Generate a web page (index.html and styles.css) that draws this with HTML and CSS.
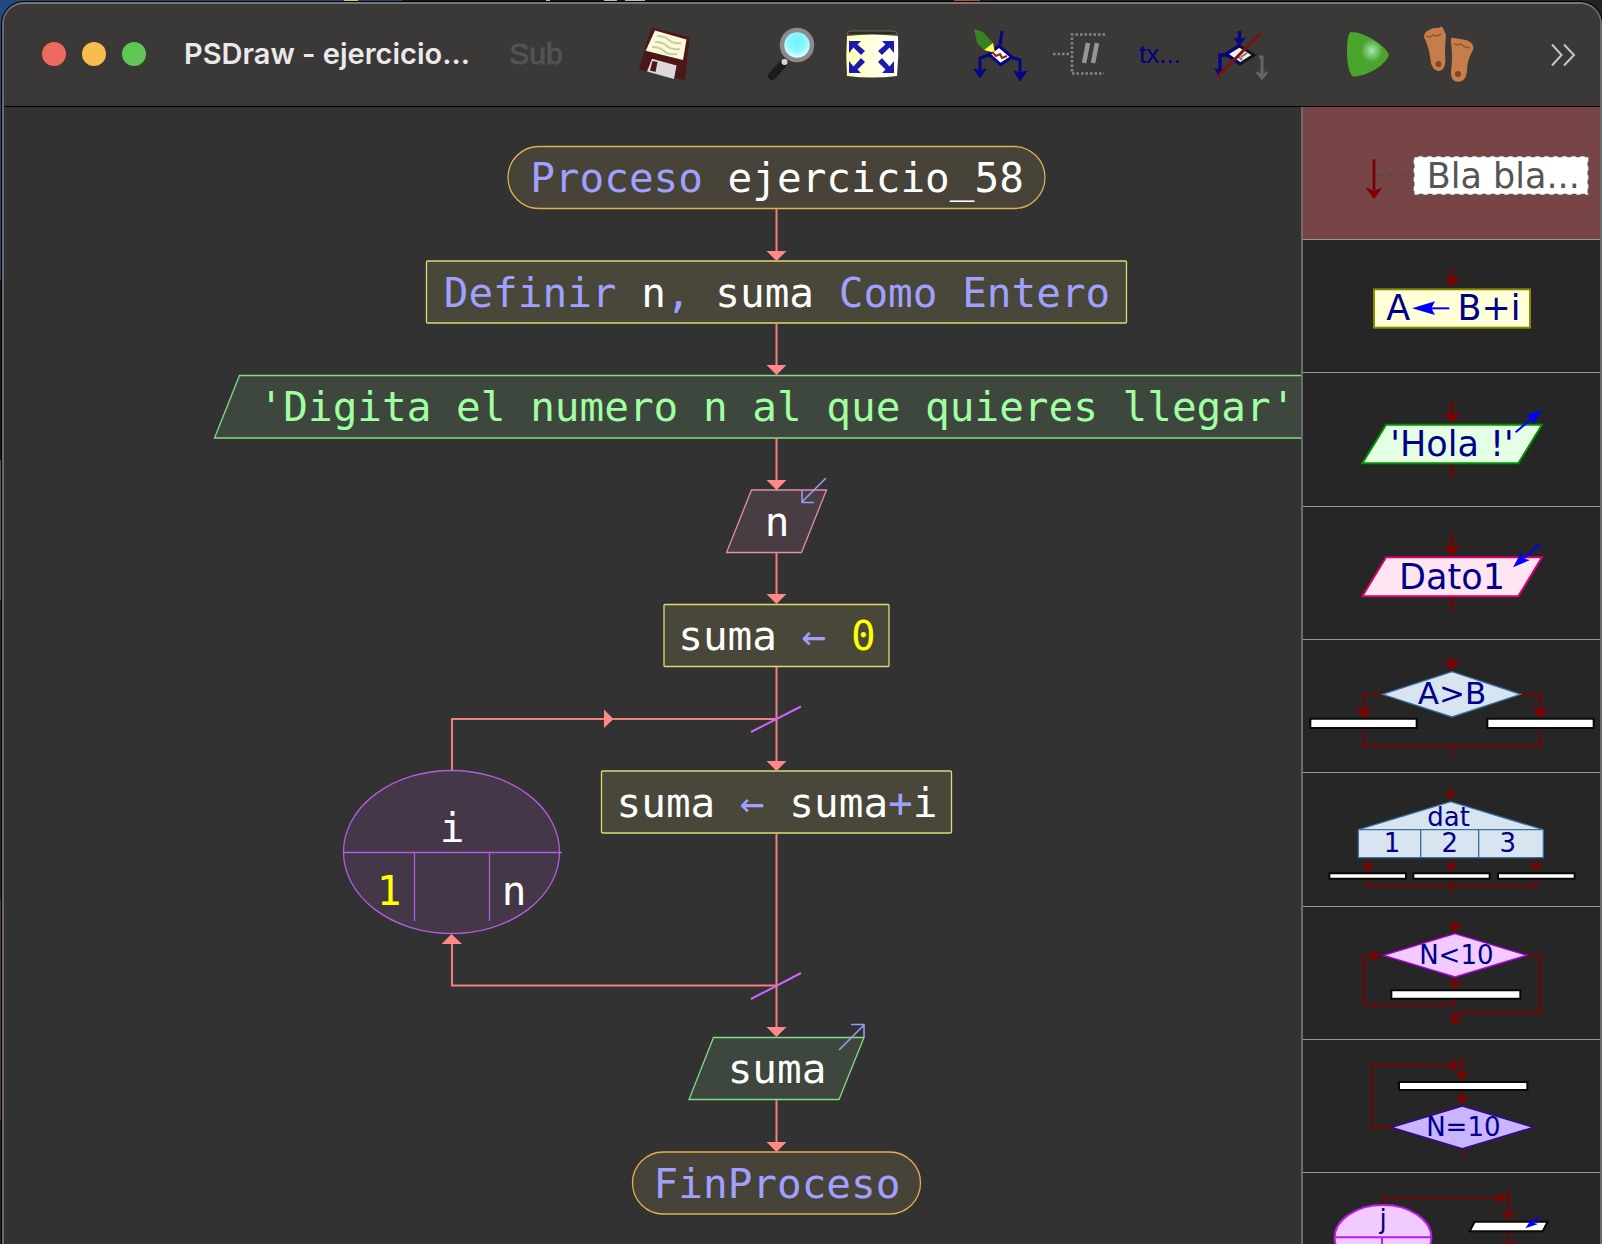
FILE: index.html
```html
<!DOCTYPE html>
<html lang="es">
<head>
<meta charset="utf-8">
<title>PSDraw - ejercicio_58</title>
<link rel="stylesheet" href="styles.css">
</head>
<body>
<svg class="defs" width="0" height="0" aria-hidden="true">
  <defs>
    <path id="head" d="M0 0L-26 -36L0 -26L26 -36Z"/>
    <path id="tip" d="M-10 -10H10L0 0Z"/>
    <radialGradient id="lens" cx="50%" cy="40%" r="60%"><stop offset="0" stop-color="#6cf3fb"/><stop offset=".5" stop-color="#8ef7fd"/><stop offset="1" stop-color="#fff"/></radialGradient>
    <linearGradient id="cream"><stop offset="0" stop-color="#ffffb8"/><stop offset=".5" stop-color="#ffffe0"/><stop offset="1" stop-color="#fff"/></linearGradient>
    <radialGradient id="gloss" cx="59%" cy="42%" r="26%"><stop offset="0" stop-color="#a4e6b4"/><stop offset="1" stop-color="#4aa52d"/></radialGradient>
  </defs>
</svg>
<div class="window">
  <header class="titlebar">
    <div class="lights">
      <button class="light close" aria-label="Cerrar"></button>
      <button class="light minimize" aria-label="Minimizar"></button>
      <button class="light expand" aria-label="Ampliar"></button>
    </div>
    <h1 class="title">PSDraw - ejercicio...</h1>
    <nav class="toolbar">
      <div class="group">
        <button class="tool sub" disabled>Sub</button>
      </div>
      <div class="group">
        <button class="tool" aria-label="Guardar">
          <svg viewBox="0 0 54 56"><path d="M15 1.5L52.6 11.3L48 54L2 43.500L11 12Z" fill="#4c1717"/><path d="M18 4.500L49.500 13.500L46 34L8.700 24.700Z" fill="#fdf8da"/><path d="M20 10q8 0 12 4t12 3M18 16q8 0 12 4t13 3M15 21q8 0 12 4t13 3" fill="none" stroke="#c0d0a4" stroke-width="2"/><path d="M15 32.700L39.500 39.500L37 53L10 45.500Z" fill="#ded8de"/><path d="M15.500 35L20.500 36L18.500 46L13 44.500Z" fill="#4c1717"/></svg>
        </button>
      </div>
      <div class="group">
        <button class="tool" aria-label="Zoom">
          <svg viewBox="0 0 54 56"><path d="M17 39L7 50" stroke="#1b1b1b" stroke-width="8" stroke-linecap="round"/><circle cx="19.500" cy="36" r="3" fill="#d8d8d8"/><circle cx="32" cy="19" r="15" fill="url(#lens)" stroke="#8b8b8b" stroke-width="4.500"/></svg>
        </button>
        <button class="tool" aria-label="Ajustar a la ventana">
          <svg viewBox="0 0 54 56"><path d="M2 9Q2 5 6 5H48Q52 5 52.500 9Z" fill="#2b2b20" stroke="#6d6d50"/><path d="M2 10Q27 7 53 10Q54 30 52 50Q27 53 2 50Q.5 30 2 10Z" fill="url(#cream)"/><path d="M4 15H16L12.500 18.500L20 25L16 29L8.500 21.500L4 27ZM49 15H37L40.500 18.500L33 25L37 29L44.500 21.500L49 27ZM4 47H16L12.500 43.500L20 36L16 32L8.500 40.500L4 35ZM49 47H37L40.500 43.500L33 36L37 32L44.500 40.500L49 35Z" fill="#1a1aae"/></svg>
        </button>
      </div>
      <div class="group">
        <button class="tool" aria-label="Editar">
          <svg viewBox="0 0 54 56"><g fill="none" stroke="#060680" stroke-width="3"><path d="M29 5L27 19M16 29L7 32V49M38 31L47 34V52"/><path d="M26 20L39 31L27.500 38.500L16 28Z" fill="#fff"/></g><path d="M1 43L7 45L13 43L7 52ZM41 45L47 47L54 45L47 55Z" fill="#060680" stroke="#060680"/><path d="M1 3L10 6L20 17L11 24L4 17Z" fill="#3a8121"/><path d="M20 17L22 27L11 24Z" fill="#ffff55"/><path d="M19 26L23 30L27 28L29 32L34 30" fill="none" stroke="#8b2323" stroke-width="2"/></svg>
        </button>
        <button class="tool" aria-label="Comentario">
          <svg viewBox="0 0 54 56"><path d="M0 28H17M52 8.500H19V47.500H51" fill="none" stroke="#858585" stroke-width="2.500" stroke-dasharray="2.500 2"/><path d="M35 17L31 37M44 17L40 37" stroke="#959595" stroke-width="4.500"/></svg>
        </button>
        <button class="tool tx">tx...</button>
        <button class="tool" aria-label="Estructura">
          <svg viewBox="0 0 54 56"><path d="M46 31H49V51M44 46L49 52L54 46" fill="none" stroke="#646464" stroke-width="3"/><path d="M26.500 20L41 29L27 38L13 28Z" fill="#f4eee0" stroke="#111122" stroke-width="3"/><path d="M27 19L13 28L26 37" fill="none" stroke="#060680" stroke-width="3"/><path d="M26.500 5V14M14 29H7V46" fill="none" stroke="#060680" stroke-width="3.500"/><path d="M20 11L26.500 13L33 11L26.500 20ZM1 42L7 44L12 42L6 51Z" fill="#060680"/><path d="M28 31L34 27M25 30L29 34" stroke="#777" stroke-width="2"/><path d="M48 7L4 51" stroke="#741414" stroke-width="3"/></svg>
        </button>
      </div>
      <div class="group">
        <button class="tool" aria-label="Ejecutar">
          <svg viewBox="0 0 54 56"><path d="M10 6C24 6 45 20 48 29C45 38 28 50 13 50.500C9 51 6 38 6 27C6 16 7 6 10 6Z" fill="url(#gloss)"/></svg>
        </button>
        <button class="tool" aria-label="Paso a paso">
          <svg viewBox="0 0 54 56"><g fill="#c57d4c"><path d="M3 11Q3 6 8 4Q13 1 18 2Q20 -1 22 2L25 9Q24 18 24 27Q26 44 18 45Q10 45 9 30Q7 19 3 11Z"/><path d="M30 16Q29 11 33 12L45 14Q54 17 52 24Q46 34 46 45Q45 56 37 56Q29 55 30 45Q32 31 30 16Z"/></g><path d="M5 10l4 1 3-2 4 1 4-2M33 18l4 1 3-1 4 3 5 1" fill="none" stroke="#985228" stroke-width="1.500"/><circle cx="17.500" cy="38" r="3" fill="#874322"/><circle cx="37" cy="48" r="3" fill="#874322"/></svg>
        </button>
      </div>
      <div class="group">
        <button class="tool more" aria-label="Más">
          <svg viewBox="0 0 28 56"><path d="M3 18.500L12.500 29L3 39.500M15 18.500L25 29L15 39.500" fill="none" stroke="#c4c4c4" stroke-width="2"/></svg>
        </button>
      </div>
    </nav>
  </header>
  <div class="workspace">
    <main class="canvas">
      <svg class="diagram" role="img" aria-label="Diagrama de flujo">
        <g transform="translate(-4 -107)">
          <g class="shape">
            <rect class="terminal" x="508" y="146.500" width="537" height="62" rx="31"/>
            <rect class="assign" x="426.500" y="261" width="700" height="62" rx="1"/>
            <path class="output" d="M239.500 375.500H1339L1314 438H214.500Z"/>
            <path class="input" d="M751.500 490H826.500L801.500 552.500H726.500Z"/>
            <rect class="assign" x="664" y="604.500" width="225" height="62" rx="1"/>
            <rect class="assign" x="601.500" y="771" width="350" height="62" rx="1"/>
            <ellipse class="loop" cx="451.500" cy="852" rx="108" ry="81.500"/>
            <path class="loop" d="M343.500 852.500H562M414.500 852.500V921M489.500 852.500V921"/>
            <path class="output" d="M713.500 1037.500H864L839 1099.500H689Z"/>
            <rect class="terminal" x="632.500" y="1152" width="288" height="62" rx="31"/>
          </g>
          <path class="flow" d="M776.500 209V252M776.500 324V367M776.500 438V482M776.500 553V596M776.500 667V762M776.500 834V1028M776.500 1100V1143M452 770V719H776M776 985.500H452V943"/>
          <g fill="#f88">
            <use href="#tip" x="776.500" y="261"/><use href="#tip" x="776.500" y="375"/><use href="#tip" x="776.500" y="490"/><use href="#tip" x="776.500" y="604"/><use href="#tip" x="776.500" y="771"/><use href="#tip" x="776.500" y="1037"/><use href="#tip" x="776.500" y="1152"/>
            <path d="M604 709.500L613.500 719L604 728ZM441.500 944H462L451.500 934Z"/>
          </g>
          <path class="cut" d="M751 732L801 706.500M751 999L801 973"/>
          <path class="io" d="M826 478L802 502M802 490V502.500H814M839 1050L864 1025M851 1024.500H864V1037"/>
          <g class="code">
            <text x="777" y="192"><tspan class="kw">Proceso</tspan> ejercicio_58</text>
            <text x="777" y="307"><tspan class="kw">Definir</tspan> n<tspan class="kw">,</tspan> suma <tspan class="kw">Como Entero</tspan></text>
            <text class="str" x="777" y="421">'Digita el numero n al que quieres llegar'</text>
            <text x="777" y="536">n</text>
            <text x="777" y="650">suma <tspan class="kw">←</tspan> <tspan class="num">0</tspan></text>
            <text x="777" y="817">suma <tspan class="kw">←</tspan> suma<tspan class="kw">+</tspan>i</text>
            <text x="452" y="842">i</text>
            <text class="num" x="389" y="905">1</text>
            <text x="514" y="905">n</text>
            <text x="777" y="1083">suma</text>
            <text class="kw" x="777" y="1198">FinProceso</text>
          </g>
        </g>
      </svg>
    </main>
    <aside class="palette">
      <button class="item selected" aria-label="Comentario">
        <svg viewBox="39 21 891 396"><path d="M252 178V270" class="wire thick"/><use href="#head" x="252" y="298" class="red"/><path d="M260 227H368" stroke="#4c4c4c" stroke-width="6" stroke-dasharray="15 20" fill="none"/><rect x="371" y="169" width="524" height="115" fill="#fff" stroke="#555" stroke-width="5" stroke-dasharray="14 13"/><text class="t-lg note" x="640" y="263">Bla bla...</text></svg>
      </button>
      <button class="item" aria-label="Asignar">
        <svg viewBox="39 420 891 396"><path d="M486 506V540" class="wire thick"/><use href="#head" x="486" y="562" class="red"/><rect x="252" y="568" width="468" height="115" fill="#ffffd8" stroke="#8a8a00" stroke-width="6"/><text class="t-lg" x="325" y="660">A</text><text class="t-lg" x="597" y="660">B+i</text><path d="M420 625H478" stroke="#00f" stroke-width="6"/><path d="M366 625L435 604L424 625L435 645Z" fill="#00f"/></svg>
      </button>
      <button class="item" aria-label="Escribir">
        <svg viewBox="39 819 891 396"><path d="M486 900V945M486 1088V1131" class="wire thick"/><use href="#head" x="486" y="968" class="red"/><path d="M288 971H756L685 1087H217Z" fill="#e4ffe4" stroke="#009000" stroke-width="6"/><text class="t-lg" x="486" y="1066">'Hola !'</text><path d="M677 994L730 948" stroke="#00f" stroke-width="6"/><path d="M755 926L706 945L724 951L730 970Z" fill="#00f"/></svg>
      </button>
      <button class="item" aria-label="Leer">
        <svg viewBox="39 21 891 396"><path d="M486 101V145M486 290V332" class="wire thick"/><use href="#head" x="486" y="170" class="red"/><path d="M288 172H756L685 289H217Z" fill="#ffe4f2" stroke="#d80068" stroke-width="6"/><text class="t-lg" x="486" y="267">Dato1</text><path d="M749 132L700 176" stroke="#00f" stroke-width="6"/><path d="M669 202L694 157L700 176L720 180Z" fill="#00f"/></svg>
      </button>
      <button class="item" aria-label="Si-Entonces">
        <svg viewBox="39 420 891 396"><path d="M486 467V490M280 584H222V640M690 584H751V640M222 688V738H751V688M487 738V767" class="wire"/><use href="#head" x="486" y="513" class="red"/><use href="#head" x="222" y="657" class="red"/><use href="#head" x="751" y="657" class="red"/><path d="M277 583L486 515L692 583L486 651Z" fill="#d8e4f0" stroke="#3870a0" stroke-width="4"/><path class="block" d="M61 656H380V684H61ZM592 656H911V684H592Z"/><text class="t-md" x="486" y="611">A&gt;B</text></svg>
      </button>
      <button class="item" aria-label="Según">
        <svg viewBox="39 819 891 396"><path d="M482 860V880M235 1073V1095M485 1073V1095M738 1073V1095M235 1136V1154H738V1136M485 1136V1175" class="wire"/><g class="red"><use href="#head" transform="translate(482 897) scale(.7)"/><use href="#head" transform="translate(234 1113) scale(.75)"/><use href="#head" transform="translate(484 1113) scale(.75)"/><use href="#head" transform="translate(738 1113) scale(.75)"/></g><path d="M205 986L482 902L760 986V1070H205ZM205 986H760M392 986V1070M566 986V1070" fill="#d8e4f0" stroke="#3870a0" stroke-width="4"/><path class="block" d="M118 1117H348V1133H118ZM370 1117H599V1133H370ZM624 1117H854V1133H624Z"/><text class="t-sm" x="476" y="974">dat</text><text class="t-sm" x="306" y="1053">1</text><text class="t-sm" x="479" y="1053">2</text><text class="t-sm" x="653" y="1053">3</text></svg>
      </button>
      <button class="item" aria-label="Mientras">
        <svg viewBox="39 51 891 396"><path d="M495 90V110M495 262V275M495 326V344H222V197H245M708 197H751V368H495V385" class="wire"/><g class="red"><use href="#head" transform="translate(495 130) scale(.85)"/><use href="#head" transform="translate(495 299) scale(.85)"/><use href="#head" transform="translate(495 407) scale(.85)"/><use href="#head" transform="translate(275 197) rotate(-90) scale(.75 1)"/></g><path d="M281 196L495 131L710 196L495 261Z" fill="#f1caff" stroke="#b000e0" stroke-width="4"/><path class="block" d="M304 301H691V326H304Z"/><text class="t-sm" x="499" y="221">N&lt;10</text></svg>
      </button>
      <button class="item" aria-label="Repetir">
        <svg viewBox="39 450 891 396"><path d="M517 500V550M517 603V625M305 712H245V526H485M517 775V797" class="wire"/><g class="red"><use href="#head" transform="translate(516 573) scale(.8)"/><use href="#head" transform="translate(516 645) scale(.8)"/><use href="#head" transform="translate(514 526) rotate(-90) scale(.75 1)"/></g><path d="M305 712L517 648L730 712L517 776Z" fill="#c9b4ff" stroke="#3c00a8" stroke-width="4"/><path class="block" d="M327 576H712V600H327Z"/><text class="t-sm" x="520" y="737">N=10</text></svg>
      </button>
      <button class="item" aria-label="Para">
        <svg viewBox="39 849 891 396"><path d="M278 940V921H620M655 894V965M655 1022V1045" class="wire"/><g class="red"><use href="#head" transform="translate(655 989) scale(.8)"/><use href="#head" transform="translate(655 1076) scale(.8)"/><use href="#head" transform="translate(652 921) rotate(-90) scale(.75 1)"/></g><ellipse cx="279" cy="1040" rx="145" ry="98" fill="#f1caff" stroke="#b81ee8" stroke-width="6"/><path d="M134 1039H424M276 1039V1136" stroke="#b81ee8" stroke-width="6"/><path d="M554 992H773L758 1021H539Z" fill="#fff" stroke="#080808" stroke-width="6"/><path d="M746 978L730 993" stroke="#00f" stroke-width="6"/><path d="M706 1012L725 984L730 995L744 999Z" fill="#00f"/><text class="t-sm" x="279" y="1010">j</text></svg>
      </button>
    </aside>
  </div>
</div>
</body>
</html>
```
FILE: styles.css
```css
* { box-sizing: border-box; }
html, body { height: 100%; }
body {
  margin: 0;
  padding: 2px 0 0 2px;
  overflow: hidden;
  font-family: Inter, "Liberation Sans", sans-serif;
  background:
    linear-gradient(90deg, #24487f 344px, #e0c850 344px 358px, #24487f 358px 402px, #151515 402px 546px, #bbb 546px 550px, #151515 550px 604px, #bbb 604px 617px, #151515 617px 625px, #bbb 625px 645px, #151515 645px 954px, #c04a28 954px 980px, #222 980px) top / 100% 1px no-repeat,
    linear-gradient(90deg, #24487f 50%, #222 50%) top / 100% 24px no-repeat,
    linear-gradient(#24487f 280px, #15181c 280px 460px, #6b543c 460px 600px, #1d2a38 600px 900px, #5c3826 900px 1120px, #20242a 1120px);
}
button {
  padding: 0;
  border: 0;
  background: none;
  color: inherit;
  font: inherit;
}
svg { display: block; }
.defs { position: absolute; }

.window {
  display: flex;
  flex-direction: column;
  height: 100%;
  border: 2px solid #6a6a6a;
  border-top-color: #777975;
  border-bottom: 0;
  border-radius: 22px 22px 0 0;
  box-shadow: 0 0 0 1px #000;
  background: #323232;
  overflow: hidden;
}

.titlebar {
  display: flex;
  flex: none;
  align-items: center;
  height: 103px;
  padding: 0 23px 2px 38px;
  border-bottom: 1px solid #000;
  background: #3b3838;
}
.lights { display: flex; gap: 16px; }
.light { width: 24px; height: 24px; border-radius: 50%; }
.close { background: #ed6a5f; }
.minimize { background: #f5be4f; }
.expand { background: #62c655; }
.title {
  flex: 1;
  margin: 0 0 0 38px;
  color: #eaeaea;
  font-size: 29px;
  font-weight: 600;
  line-height: 38px;
  white-space: nowrap;
}
.toolbar { display: flex; gap: 74px; }
.group { display: flex; gap: 26px; }
.tool { width: 54px; height: 56px; }
.tool svg { width: 100%; height: 100%; overflow: visible; }
.more { width: 28px; }
.sub, .tx { font-family: "Liberation Sans Narrow", "Liberation Sans", sans-serif; white-space: nowrap; }
.sub { color: #535353; font-size: 30px; -webkit-text-stroke: 1px #535353; }
.tx { color: #000080; font-size: 26px; }

.workspace { display: flex; flex: 1; min-height: 0; }
.canvas { flex: 1; min-width: 0; }
.diagram { width: 100%; height: 100%; }
.shape { stroke-width: 1.3; }
.terminal { fill: #484338; stroke: #e0b050; }
.assign { fill: #48473a; stroke: #dddc70; }
.output { fill: #3e473d; stroke: #86dc86; }
.input { fill: #483d43; stroke: #e48cb4; }
.loop { fill: #443748; stroke: #b45ce0; }
.flow { fill: none; stroke: #f27f7f; stroke-width: 2; }
.cut { fill: none; stroke: #cc66f8; stroke-width: 2; }
.io { fill: none; stroke: #9a9af4; stroke-width: 1.6; }
.code {
  fill: #fff;
  font-family: "DejaVu Sans Mono", monospace;
  font-size: 41px;
  text-anchor: middle;
}
.kw { fill: #a0a0ff; }
.str { fill: #a0ffa0; }
.num { fill: #ff0; }

.palette {
  display: grid;
  flex: none;
  grid-auto-rows: 133px 133px 134px;
  align-content: start;
  width: 299px;
  border-left: 2px solid #6c6c6c;
  background: #262626;
  overflow: hidden;
}
.item { border-bottom: 1px solid #999; }
.item svg { width: 100%; height: 132px; }
.selected { background: #784547; }
.wire { fill: none; stroke: #780000; stroke-width: 6; }
.thick { stroke-width: 8; }
.red { fill: #800000; }
.block { fill: #fff; stroke: #080808; stroke-width: 6; }
.palette text {
  fill: #000088;
  font-family: "DejaVu Sans", sans-serif;
  text-anchor: middle;
}
.palette .note { fill: #555; }
.t-lg { font-size: 105px; }
.t-md { font-size: 93px; }
.t-sm { font-size: 78px; }
```
